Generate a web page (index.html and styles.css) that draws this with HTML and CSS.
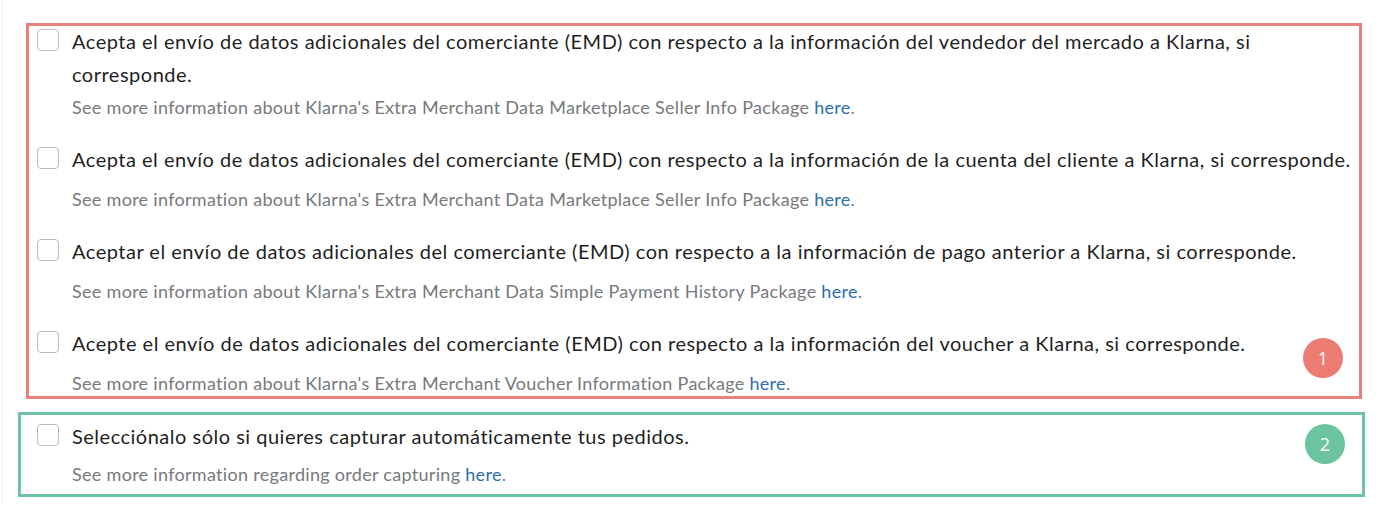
FILE: index.html
```html
<!DOCTYPE html>
<html lang="es">
<head>
<meta charset="utf-8">
<link rel="stylesheet" href="styles.css">
</head>
<body>
<div class="page">
  <section class="group group-red">
    <div class="item">
      <div class="row">
        <span class="box"></span>
        <span class="label">Acepta el envío de datos adicionales del comerciante (EMD) con respecto a la información del vendedor del mercado a Klarna, si corresponde.</span>
      </div>
      <p class="note">See more information about Klarna's Extra Merchant Data Marketplace Seller Info Package <a href="#">here</a>.</p>
    </div>
    <div class="item">
      <div class="row">
        <span class="box"></span>
        <span class="label">Acepta el envío de datos adicionales del comerciante (EMD) con respecto a la información de la cuenta del cliente a Klarna, si corresponde.</span>
      </div>
      <p class="note">See more information about Klarna's Extra Merchant Data Marketplace Seller Info Package <a href="#">here</a>.</p>
    </div>
    <div class="item">
      <div class="row">
        <span class="box"></span>
        <span class="label">Aceptar el envío de datos adicionales del comerciante (EMD) con respecto a la información de pago anterior a Klarna, si corresponde.</span>
      </div>
      <p class="note">See more information about Klarna's Extra Merchant Data Simple Payment History Package <a href="#">here</a>.</p>
    </div>
    <div class="item">
      <div class="row">
        <span class="box"></span>
        <span class="label">Acepte el envío de datos adicionales del comerciante (EMD) con respecto a la información del voucher a Klarna, si corresponde.</span>
      </div>
      <p class="note">See more information about Klarna's Extra Merchant Voucher Information Package <a href="#">here</a>.</p>
    </div>
    <span class="badge badge-red">1</span>
  </section>
  <section class="group group-green">
    <div class="item">
      <div class="row">
        <span class="box"></span>
        <span class="label">Selecciónalo sólo si quieres capturar automáticamente tus pedidos.</span>
      </div>
      <p class="note">See more information regarding order capturing <a href="#">here</a>.</p>
    </div>
    <span class="badge badge-green">2</span>
  </section>
</div>
</body>
</html>
```
FILE: styles.css
```css
html, body {
  margin: 0;
  padding: 0;
  background: #ffffff;
}
body {
  font-family: Lato, "Open Sans", Arial, sans-serif;
  color: #222222;
}
.page {
  margin-left: 2px;
  border-left: 1px solid #ececec;
  padding-top: 23px;
  height: 480px;
  width: 1366px;
}
.group {
  position: relative;
  border: 3px solid #ea807a;
}
.group-red {
  margin-left: 23px;
  width: 1330px;
}
.group-green {
  margin-left: 15px;
  margin-top: 13px;
  width: 1341px;
  border-color: #6ec4a1;
  padding: 6px 0 7px;
}
.item {
  padding-left: 8px;
}
.group-green .item {
  padding-left: 16px;
}
.item + .item {
  margin-top: 24px;
}
.row {
  display: flex;
  align-items: flex-start;
  gap: 13px;
  min-height: 39px;
}
.box {
  flex: none;
  width: 20px;
  height: 20px;
  margin-top: 3px;
  border: 1px solid #b9bcc2;
  border-radius: 4px;
  background: #fff;
}
.label {
  font-size: 20px;
  letter-spacing: 0.5px;
  line-height: 33px;
  color: #1f1f1f;
  margin-top: -1px;
}
.note {
  margin: 3px 0 0;
  padding-left: 35px;
  font-size: 18px;
  letter-spacing: 0.3px;
  line-height: 26px;
  color: #77797c;
}
.group-green .note {
  margin-top: 1px;
}
.note a {
  color: #2c6db3;
  text-decoration: none;
}
.badge {
  position: absolute;
  width: 40px;
  height: 40px;
  border-radius: 50%;
  color: #fff;
  font-size: 18px;
  line-height: 40px;
  text-align: center;
  font-family: "Open Sans", Arial, sans-serif;
}
.badge-red {
  background: #ec7b74;
  right: 16px;
  bottom: 18px;
}
.badge-green {
  background: #6cc3a0;
  right: 17px;
  top: 9px;
}
```
